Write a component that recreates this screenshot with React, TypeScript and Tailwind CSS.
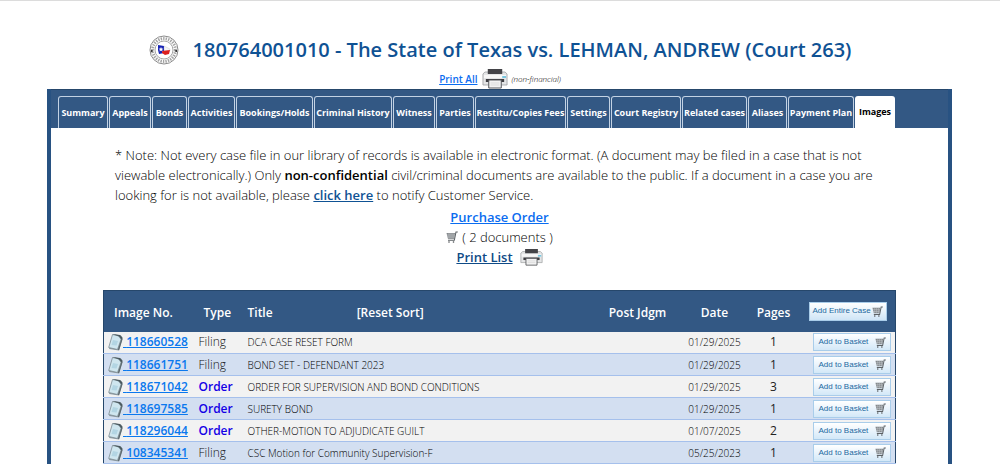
const tabs = [
  "Summary",
  "Appeals",
  "Bonds",
  "Activities",
  "Bookings/Holds",
  "Criminal History",
  "Witness",
  "Parties",
  "Restitu/Copies Fees",
  "Settings",
  "Court Registry",
  "Related cases",
  "Aliases",
  "Payment Plan",
  "Images",
];

const documents = [
  { id: "118660528", type: "Filing", title: "DCA CASE RESET FORM", date: "01/29/2025", pages: 1 },
  { id: "118661751", type: "Filing", title: "BOND SET - DEFENDANT 2023", date: "01/29/2025", pages: 1 },
  { id: "118671042", type: "Order", title: "ORDER FOR SUPERVISION AND BOND CONDITIONS", date: "01/29/2025", pages: 3 },
  { id: "118697585", type: "Order", title: "SURETY BOND", date: "01/29/2025", pages: 1 },
  { id: "118296044", type: "Order", title: "OTHER-MOTION TO ADJUDICATE GUILT", date: "01/07/2025", pages: 2 },
  { id: "108345341", type: "Filing", title: "CSC Motion for Community Supervision-F", date: "05/25/2023", pages: 1 },
];

const CountySeal = () => (
  <svg viewBox="0 0 30 30" className="size-[30px] shrink-0" aria-hidden="true">
    <circle cx="15" cy="15" r="14" fill="#fff" stroke="#8b8b8b" strokeWidth="1" />
    <circle cx="15" cy="15" r="11.4" fill="none" stroke="#a3a3a3" strokeWidth="3" strokeDasharray="1.4 1.1" />
    <circle cx="15" cy="15" r="9" fill="#fff" stroke="#8f8f8f" strokeWidth=".8" />
    <circle cx="2.8" cy="16" r="1" fill="#222" />
    <circle cx="27.2" cy="16" r="1" fill="#222" />
    <path d="M9 10l6 1v7l-5 1-1-4z" fill="#1723b5" />
    <path d="M15 11l6 3v2h-6z" fill="#f4f4f4" stroke="#aaa" strokeWidth=".3" />
    <path d="M13 16l8-1-1 4-4 1-3-2z" fill="#dc2020" />
    <path d="M12 12l.7 1.6 1.7.1-1.3 1.1.4 1.7-1.5-.9-1.5.9.4-1.7-1.3-1.1 1.7-.1z" fill="#fff" />
  </svg>
);

const PrinterIcon = ({ className }: { className: string }) => (
  <svg viewBox="0 0 27 20" preserveAspectRatio="none" className={className} aria-hidden="true">
    <path d="M3 3h21l2 2v11H1V5z" fill="#e4e5e6" stroke="#9a9c9e" strokeWidth=".8" />
    <path d="M6 0h15v5H6z" fill="#434347" />
    <path d="M2 6h23v3H2z" fill="#f7f7f7" />
    <path d="M21 7h4v2h-4z" fill="#7bc7e0" />
    <path d="M4 10h19v3H4z" fill="#3d3d41" />
    <path d="M7 11h13v8H7z" fill="#f3f3f3" stroke="#55565a" strokeWidth="1" />
    <path d="M9 14h9M9 16h9" stroke="#d5d5d5" strokeWidth=".8" />
  </svg>
);

const CartIcon = ({ className }: { className: string }) => (
  <svg viewBox="0 0 12 12" className={className} aria-hidden="true">
    <path d="M.5 2H9L8 8H2z" fill="#85898c" />
    <path d="M3 2v6M5 2v6M7 2v6M1 4h8M1 6h7" stroke="#c4cace" strokeWidth=".5" />
    <path d="M11.8 1H10L8.300 9.300H2" fill="none" stroke="#5c6165" strokeWidth="1.1" />
    <circle cx="3" cy="11" r=".8" fill="#4b4f52" />
    <circle cx="7.5" cy="11" r=".8" fill="#4b4f52" />
  </svg>
);

const DocumentIcon = () => (
  <svg viewBox="0 0 15 18" className="h-[18px] w-[15px] shrink-0" aria-hidden="true">
    <path d="M5 1l8 1.500 1.500 3L11 17.500 1 16z" fill="#8f9ca3" />
    <path d="M4.500 1.500l6.500 1.500 2 3.500-3.500 10L.7 14.500z" fill="#cfe6ef" stroke="#7d8b92" strokeWidth=".8" />
    <path d="M4.500 1l7.500 1 2.500 2.500-.5 2.500-3-3.500z" fill="#4b5a60" />
    <path d="M14 6l-3.500 11" stroke="#5d6a70" strokeWidth="1.200" />
    <path d="M5 7l5 1-1.500 4.500-5-.5z" fill="#b3d5e3" />
  </svg>
);

const CaseTabs = () => (
  <nav className="mr-[50px] ml-1 grid h-8 grid-cols-[51fr_43fr_36fr_48fr_78fr_79fr_43fr_39fr_92fr_44fr_71fr_66fr_40fr_67fr_40fr]">
    {tabs.map((tab) => (
      <a
        key={tab}
        href="#"
        className={
          tab === "Images"
            ? "flex items-center justify-center rounded-t-[3px] bg-white text-[9px] font-bold whitespace-nowrap text-black"
            : "mr-px flex items-center justify-center rounded-t-[3px] border border-b-0 border-[#c3d2e4] text-[9px] font-bold whitespace-nowrap text-white"
        }
      >
        {tab}
      </a>
    ))}
  </nav>
);

const DocumentTable = () => (
  <table className="w-full table-fixed border-collapse border-x border-[#26476b]">
    <colgroup>
      <col className="w-[92px]" />
      <col className="w-[48px]" />
      <col />
      <col className="w-[88px]" />
      <col className="w-[66px]" />
      <col className="w-[52px]" />
      <col className="w-[96px]" />
    </colgroup>
    <thead>
      <tr className="h-[41px] border-t border-[#26476b] bg-[#335884] text-left text-[12px] text-white">
        <th className="pt-1 pl-[10px] font-semibold">Image No.</th>
        <th className="pt-1 pl-2 font-semibold">Type</th>
        <th className="pt-1 pl-1 font-semibold">
          <div className="flex gap-[84px]">
            <span>Title</span>
            <button className="font-semibold whitespace-nowrap">[Reset Sort]</button>
          </div>
        </th>
        <th className="pt-1 text-center font-semibold whitespace-nowrap">Post Jdgm</th>
        <th className="pt-1 text-center font-semibold">Date</th>
        <th className="pt-1 text-center font-semibold">Pages</th>
        <th className="pl-[9px]">
          <button className="flex h-[19px] w-[78px] items-center justify-between border border-[#a9cdea] bg-linear-to-b from-white to-[#cfe5f6] px-[3px] font-['Liberation_Sans',sans-serif] text-[8px] font-normal whitespace-nowrap text-[#22699f]">
            Add Entire Case
            <CartIcon className="size-[11px] shrink-0" />
          </button>
        </th>
      </tr>
    </thead>
    <tbody>
      {documents.map((doc) => (
        <tr key={doc.id} className="h-[22px] border-b border-[#a5c0ec] odd:bg-[#f2f2f2] even:bg-[#d3dff1]">
          <td className="pl-1">
            <a href="#" className="flex items-center text-[12px] leading-5 font-semibold text-[#0a78ee]">
              <DocumentIcon />
              <span className="whitespace-pre underline"> {doc.id}</span>
            </a>
          </td>
          <td
            className={
              doc.type === "Order"
                ? "pl-[3px] text-[12px] leading-5 font-semibold text-[#1400e6]"
                : "pl-[3px] text-[12px] leading-5 font-light text-[#111]"
            }
          >
            {doc.type}
          </td>
          <td className="pl-1 text-[10px] leading-5 font-light whitespace-nowrap text-black">{doc.title}</td>
          <td />
          <td className="text-center text-[10px] leading-5 font-light text-black">{doc.date}</td>
          <td className="text-center text-[12px] leading-5 text-[#222]">{doc.pages}</td>
          <td className="pl-[13px]">
            <button className="flex h-[18px] w-[78px] items-center justify-between border border-[#a9cdea] bg-linear-to-b from-white to-[#d3e8f8] pr-1 pl-[5px] font-['Liberation_Sans',sans-serif] text-[8px] whitespace-nowrap text-[#22699f]">
              Add to Basket
              <CartIcon className="size-[11px] shrink-0" />
            </button>
          </td>
        </tr>
      ))}
    </tbody>
  </table>
);

const App = () => (
  <div className="min-h-screen border-t border-[#dcdcdc] bg-white font-['Open_Sans',sans-serif] text-black">
    <header className="flex flex-col items-center pt-[34px]">
      <div className="flex items-center gap-[14px]">
        <CountySeal />
        <h1 className="text-[20px] leading-7 font-semibold whitespace-nowrap text-[#0f5294]">
          180764001010 - The State of Texas vs. LEHMAN, ANDREW (Court 263)
        </h1>
      </div>
      <div className="flex h-6 items-center gap-1 pt-1 text-[10px]">
        <a href="#" className="font-semibold text-[#0a6cf0] underline">
          Print All
        </a>
        <PrinterIcon className="h-5 w-[26px]" />
        <em className="text-[8px] font-light">(non-financial)</em>
      </div>
    </header>

    <main className="mr-12 ml-[47px] border-x-4 border-[#285282]">
      <div className="border-t border-[#26476b] bg-[#335884] px-[3px] pt-[6px]">
        <CaseTabs />
      </div>

      <div className="mx-[52px]">
        <p className="mx-3 pt-[17px] text-[13px] leading-5 font-light">
          * Note: Not every case file in our library of records is available in electronic format. (A document may be
          filed in a case that is not viewable electronically.) Only{" "}
          <b className="font-semibold">non-confidential</b> civil/criminal documents are available to the public. If a
          document in a case you are looking for is not available, please{" "}
          <a href="#" className="font-semibold text-[#0f5294] underline">
            click here
          </a>{" "}
          to notify Customer Service.
        </p>

        <div className="mt-[2px] mb-[23px] flex flex-col items-center text-[13px] leading-5">
          <a href="#" className="font-semibold text-[#0a6cf0] underline">
            Purchase Order
          </a>
          <div className="flex items-center gap-1 font-light">
            <CartIcon className="size-3" />( 2 documents )
          </div>
          <a href="#" className="flex items-center gap-[7px] font-semibold text-[#0f4a86]">
            <span className="underline">Print List</span>
            <PrinterIcon className="h-[17px] w-[23px]" />
          </a>
        </div>

        <DocumentTable />
      </div>
    </main>
  </div>
);

export default App;
